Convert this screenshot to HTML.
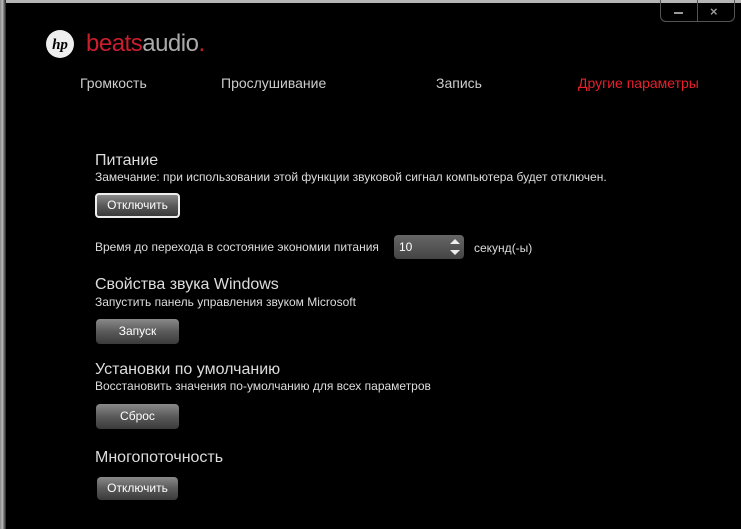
<!DOCTYPE html>
<html><head><meta charset="utf-8"><style>
*{margin:0;padding:0;box-sizing:border-box}
body{width:741px;height:529px;overflow:hidden;background:#000;position:relative;font-family:"Liberation Sans",sans-serif;color:#ddd}
.ledge{position:absolute;left:0;top:0;width:6px;height:529px;background:linear-gradient(90deg,#888,#bbb 40%,#666 70%,#222)}
.tedge{position:absolute;left:0;top:0;width:741px;height:3px;background:#b5b5b5}
.ab{position:absolute}
.t{position:absolute;white-space:nowrap}
.btn{position:absolute;height:25px;border-radius:4px;background:linear-gradient(#8a8a8a,#5a5a5a 50%,#3a3a3a);color:#fff;font-size:12px;text-align:center;line-height:25px}
</style></head><body>
<div class="tedge"></div><div class="ledge"></div>
<div class="ab" style="left:660px;top:0;width:75px;height:22px;border:1px solid #555;border-top:none;border-radius:0 0 6px 6px"></div>
<div class="ab" style="left:697px;top:0;width:1px;height:22px;background:#555"></div>
<div class="ab" style="left:674px;top:12px;width:9px;height:2px;background:#999"></div>
<div class="t" style="left:710px;top:4px;font-size:13px;color:#999;font-weight:bold">×</div>
<svg class="ab" style="left:45px;top:29px" width="30" height="30" viewBox="0 0 30 30"><circle cx="15" cy="15" r="14" fill="#eee"/><text x="15" y="20" text-anchor="middle" font-family="Liberation Serif" font-style="italic" font-weight="bold" font-size="15" fill="#000">hp</text></svg>
<div class="t" style="left:86px;top:30px;font-size:24px;letter-spacing:-0.5px"><span style="color:#c81e2e">beats</span><span style="color:#aaa">audio</span><span style="color:#c81e2e">.</span></div>
<div class="t" style="left:80px;top:75px;font-size:14px;color:#ccc">Громкость</div>
<div class="t" style="left:221px;top:75px;font-size:14px;color:#ccc">Прослушивание</div>
<div class="t" style="left:436px;top:75px;font-size:14px;color:#ccc">Запись</div>
<div class="t" style="left:578px;top:75px;font-size:14px;color:#e8202a">Другие параметры</div>

<div class="t" style="left:95px;top:152px;font-size:16px;color:#ddd">Питание</div>
<div class="t" style="left:95px;top:170px;font-size:12px;color:#ddd">Замечание: при использовании этой функции звуковой сигнал компьютера будет отключен.</div>
<div class="btn" style="left:95px;top:193px;width:85px;border:2px solid #eee;line-height:21px">Отключить</div>
<div class="t" style="left:95px;top:240px;font-size:12px;color:#ddd">Время до перехода в состояние экономии питания</div>
<div class="ab" style="left:394px;top:235px;width:70px;height:24px;border-radius:4px;background:linear-gradient(#666,#444)"></div>
<div class="t" style="left:399px;top:240px;font-size:12px;color:#fff">10</div>
<svg class="ab" style="left:448px;top:237px" width="14" height="20"><path d="M2 7L7 2L12 7Z M2 13L7 18L12 13Z" fill="#eee"/></svg>
<div class="t" style="left:474px;top:241px;font-size:12px;color:#ddd">секунд(-ы)</div>

<div class="t" style="left:95px;top:276px;font-size:16px;color:#ddd">Свойства звука Windows</div>
<div class="t" style="left:95px;top:295px;font-size:12px;color:#ddd">Запустить панель управления звуком Microsoft</div>
<div class="btn" style="left:96px;top:319px;width:83px">Запуск</div>

<div class="t" style="left:95px;top:361px;font-size:16px;color:#ddd">Установки по умолчанию</div>
<div class="t" style="left:95px;top:379px;font-size:12px;color:#ddd">Восстановить значения по-умолчанию для всех параметров</div>
<div class="btn" style="left:96px;top:404px;width:83px">Сброс</div>

<div class="t" style="left:95px;top:449px;font-size:16px;color:#ddd">Многопоточность</div>
<div class="btn" style="left:97px;top:477px;width:81px;height:23px;line-height:23px">Отключить</div>
</body></html>
